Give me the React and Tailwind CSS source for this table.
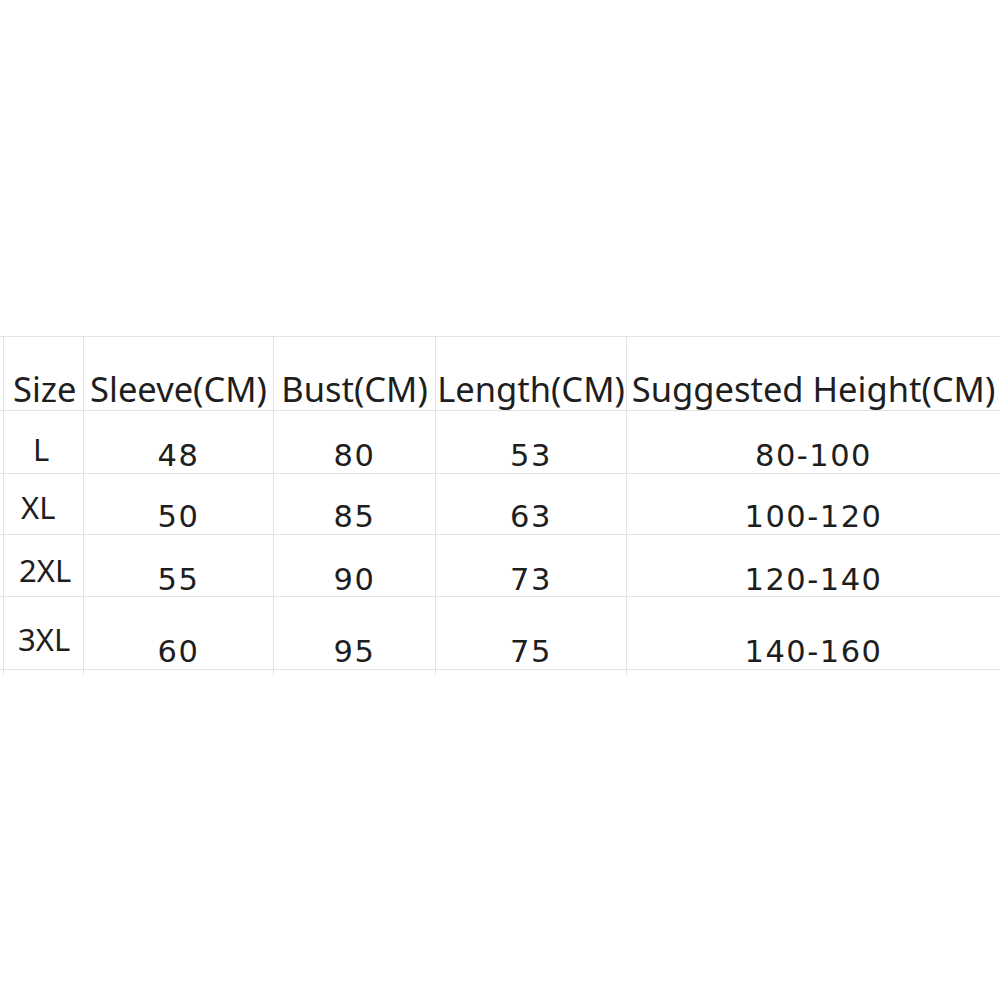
const cols = 'grid grid-cols-[3px_80px_190px_162px_191px_1fr]'
const cell = 'flex items-center justify-center border-l border-[#e3e3e3] text-[#1e1e1e]'

const rows = [
  { size: 'L', sizePad: 'pl-[29px] pt-[8px]', pad: 'pt-[22px]', h: 'h-[63px]', vals: ['48', '80', '53', '80-100'] },
  { size: 'XL', sizePad: 'pl-[17px]', pad: 'pt-[20px]', h: 'h-[61px]', vals: ['50', '85', '63', '100-120'] },
  { size: '2XL', sizePad: 'pl-[15px] pt-[2px]', pad: 'pt-[22px]', h: 'h-[62px]', vals: ['55', '90', '73', '120-140'] },
  { size: '3XL', sizePad: 'pl-[14px] pt-[6px]', pad: 'pt-[32px]', h: 'h-[73px]', vals: ['60', '95', '75', '140-160'] },
]

export default function App() {
  return (
    <div className="h-[1000px] w-[1000px] overflow-hidden bg-white pt-[336px] font-['Noto_Sans',sans-serif]">
      <div className="border-t border-[#e3e3e3]">
        <div className={`${cols} h-[74px] border-b border-[#e3e3e3] text-[34.5px]`}>
          <div />
          <div className="flex items-center border-l border-[#e3e3e3] pl-[9px] pt-[26px] text-[#1e1e1e]">Size</div>
          <div className={`${cell} pt-[26px]`}>Sleeve(CM)</div>
          <div className={`${cell} pt-[26px]`}>Bust(CM)</div>
          <div className={`${cell} pt-[26px]`}>Length(CM)</div>
          <div className={`${cell} pt-[26px] whitespace-nowrap`}>Suggested Height(CM)</div>
        </div>
        {rows.map((row) => (
          <div key={row.size} className={`${cols} ${row.h} border-b border-[#e3e3e3]`}>
            <div />
            <div className={`flex items-center border-l border-[#e3e3e3] text-[31px] text-[#1e1e1e] ${row.sizePad}`}>{row.size}</div>
            {row.vals.map((v, i) => (
              <div key={i} className={`${cell} ${row.pad} font-['DejaVu_Sans',sans-serif] text-[30.5px] tracking-[1.5px]`}>{v}</div>
            ))}
          </div>
        ))}
      </div>
    </div>
  )
}
